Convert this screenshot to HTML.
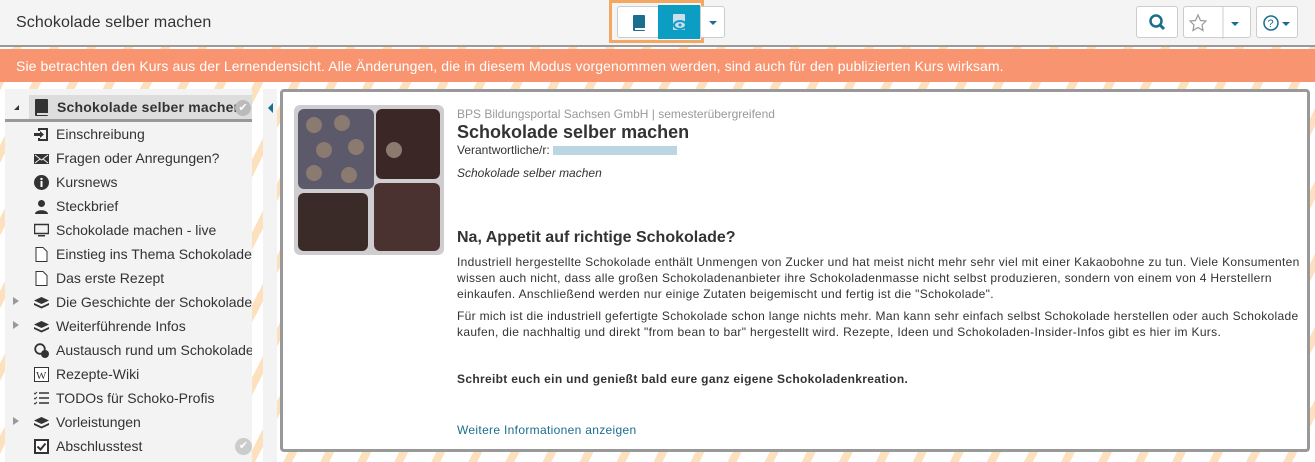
<!DOCTYPE html>
<html><head><meta charset="utf-8"><style>
*{box-sizing:border-box;margin:0;padding:0}
body{width:1315px;height:462px;overflow:hidden;font-family:"Liberation Sans",sans-serif;color:#333;position:relative;
background:repeating-linear-gradient(117deg,#fde0bd 0 8px,#fff 8px 33px);}
.top{position:absolute;left:0;top:0;width:1315px;height:47px;background:#f4f4f4;border-bottom:2px solid #999}
.top h1{position:absolute;left:16px;top:14px;font-size:16px;font-weight:normal;color:#333;letter-spacing:0.1px}
.btn{position:absolute;background:#fff;border:1px solid #ccc;border-radius:3px}
.banner{position:absolute;left:0;top:49px;width:1315px;height:33px;background:#f99470;color:#fff;font-size:14px;padding:9px 16px;letter-spacing:0.1px}
.side{position:absolute;left:5px;top:89px;width:247px;height:373px;background:#f3f3f3}
.coll{position:absolute;left:263px;top:89px;width:14px;height:373px;background:#f3f3f3}
.item{position:absolute;left:0;height:24px;font-size:14px;color:#333;white-space:nowrap;width:247px;overflow:hidden}
.item span{position:absolute;left:51px;top:4px}
.item .ic{position:absolute;left:29px;top:5px;width:15px;height:15px}
.tri{position:absolute;left:8px;top:7px;width:0;height:0;border-left:6px solid #999;border-top:4px solid transparent;border-bottom:4px solid transparent}
.main{position:absolute;left:280px;top:89px;width:1030px;height:363px;background:#fff;border:3px solid #999;border-radius:4px}
.p{position:absolute;left:174px;font-size:12px;line-height:16px;width:852px;color:#333}
.t{letter-spacing:0.32px}
</style></head><body>
<div class="top"><h1>Schokolade selber machen</h1>
<div style="position:absolute;left:609px;top:0;width:95px;height:43px;border:3px solid #f2a863"></div>
<div class="btn" style="left:617px;top:6px;width:42px;height:32px;border-radius:3px 0 0 3px"><svg width="42" height="32"><rect x="15" y="8" width="12" height="16" rx="1" fill="#1a6e8e"/><rect x="17" y="21" width="10" height="2" fill="#fff"/></svg></div>
<div style="position:absolute;left:658px;top:5px;width:42px;height:34px;background:#0b9dc2"><svg width="42" height="34"><rect x="15" y="9" width="12" height="16" rx="1" fill="#cde" /><ellipse cx="22" cy="20" rx="6" ry="4" fill="none" stroke="#0b9dc2" stroke-width="2"/><circle cx="22" cy="20" r="1.5" fill="#0b9dc2"/></svg></div>
<div class="btn" style="left:700px;top:6px;width:25px;height:32px;border-radius:0 3px 3px 0"><div style="position:absolute;left:8px;top:14px;border-top:4px solid #1a6e8e;border-left:4px solid transparent;border-right:4px solid transparent"></div></div>
<div class="btn" style="left:1136px;top:6px;width:42px;height:32px"><svg width="42" height="32"><circle cx="19" cy="14" r="5.5" fill="none" stroke="#1a6e8e" stroke-width="2.5"/><line x1="23" y1="18" x2="27" y2="22" stroke="#1a6e8e" stroke-width="3"/></svg></div>
<div class="btn" style="left:1183px;top:6px;width:68px;height:32px"><svg width="68" height="32"><polygon points="14,8 16.5,13.5 22,14 18,18 19,23.5 14,20.5 9,23.5 10,18 6,14 11.5,13.5" fill="none" stroke="#999" stroke-width="1.2"/><line x1="39" y1="0" x2="39" y2="32" stroke="#ccc"/><polygon points="47,15 55,15 51,19" fill="#1a6e8e"/></svg></div>
<div class="btn" style="left:1256px;top:6px;width:42px;height:32px"><svg width="42" height="32"><circle cx="14" cy="16" r="7" fill="none" stroke="#1a6e8e" stroke-width="1.5"/><text x="10.5" y="20" font-size="11" fill="#1a6e8e" font-family="Liberation Sans">?</text><polygon points="25,15 33,15 29,19" fill="#1a6e8e"/></svg></div>
</div>
<div class="banner">Sie betrachten den Kurs aus der Lernendensicht. Alle Änderungen, die in diesem Modus vorgenommen werden, sind auch für den publizierten Kurs wirksam.</div>
<div class="side">
<div style="position:absolute;left:0;top:6px;width:247px;height:27px;border-bottom:3px solid #999"></div>
<div style="position:absolute;left:24px;top:6px;width:223px;height:24px;background:#ddd"></div>
<div style="position:absolute;left:9px;top:16px;border-bottom:5px solid #333;border-left:5px solid transparent"></div>
<svg style="position:absolute;left:29px;top:10px" width="16" height="18"><rect x="1" y="0" width="13" height="17" rx="1" fill="#333"/><rect x="3" y="14" width="11" height="2" fill="#ddd"/></svg>
<div style="position:absolute;left:52px;top:10px;font-size:14px;font-weight:bold;color:#333;white-space:nowrap;width:180px;overflow:hidden;letter-spacing:0.2px">Schokolade selber machen</div>
<div style="position:absolute;left:230px;top:11px;width:16px;height:16px;border-radius:50%;background:#bbb;color:#fff;font-size:11px;text-align:center;line-height:16px">✔</div>
<div class="item" style="top:33px"><svg class="ic" viewBox="0 0 15 15"><path d="M4 1h10v13H4v-3h2v1h6V3H6v1H4z M0 6h6V4l4 3.5L6 11V9H0z" fill="#333"/></svg><span>Einschreibung</span></div>
<div class="item" style="top:57px"><svg class="ic" viewBox="0 0 15 15"><rect x="0" y="3" width="15" height="10" fill="#333"/><path d="M1 4l6.5 5L14 4M1 12l5-4M14 12l-5-4" stroke="#f3f3f3" fill="none"/></svg><span>Fragen oder Anregungen?</span></div>
<div class="item" style="top:81px"><svg class="ic" viewBox="0 0 15 15"><circle cx="7.5" cy="7.5" r="7.5" fill="#333"/><rect x="6.5" y="6" width="2" height="6" fill="#fff"/><circle cx="7.5" cy="4" r="1.2" fill="#fff"/></svg><span>Kursnews</span></div>
<div class="item" style="top:105px"><svg class="ic" viewBox="0 0 15 15"><circle cx="7.5" cy="4.5" r="3.5" fill="#333"/><path d="M1 15c0-5 13-5 13 0z" fill="#333"/></svg><span>Steckbrief</span></div>
<div class="item" style="top:129px"><svg class="ic" viewBox="0 0 15 15"><rect x="0.5" y="1.5" width="14" height="9" fill="none" stroke="#333" stroke-width="1.5"/><rect x="4" y="12" width="7" height="1.5" fill="#333"/></svg><span>Schokolade machen - live</span></div>
<div class="item" style="top:153px"><svg class="ic" viewBox="0 0 15 15"><path d="M2 0.5h7l4 4v10H2z" fill="#fff" stroke="#333"/></svg><span>Einstieg ins Thema Schokolade</span></div>
<div class="item" style="top:177px"><svg class="ic" viewBox="0 0 15 15"><path d="M2 0.5h7l4 4v10H2z" fill="#fff" stroke="#333"/></svg><span>Das erste Rezept</span></div>
<div class="item" style="top:201px"><div class="tri"></div><svg class="ic" viewBox="0 0 15 15"><path d="M7.5 2L15 5.5 7.5 9 0 5.5z M0 8l7.5 3.5L15 8v2l-7.5 3.5L0 10z" fill="#333"/></svg><span>Die Geschichte der Schokolade</span></div>
<div class="item" style="top:225px"><div class="tri"></div><svg class="ic" viewBox="0 0 15 15"><path d="M7.5 2L15 5.5 7.5 9 0 5.5z M0 8l7.5 3.5L15 8v2l-7.5 3.5L0 10z" fill="#333"/></svg><span>Weiterführende Infos</span></div>
<div class="item" style="top:249px"><svg class="ic" viewBox="0 0 15 15"><circle cx="6" cy="6" r="4.8" fill="none" stroke="#333" stroke-width="1.8"/><circle cx="11" cy="11" r="4" fill="#333"/></svg><span>Austausch rund um Schokolade</span></div>
<div class="item" style="top:273px"><svg class="ic" viewBox="0 0 15 15"><rect x="0.5" y="0.5" width="14" height="14" fill="#fff" stroke="#333"/><text x="2" y="12" font-size="11" font-family="Liberation Serif" fill="#333">W</text></svg><span>Rezepte-Wiki</span></div>
<div class="item" style="top:297px"><svg class="ic" viewBox="0 0 15 15"><path d="M5 2h10M5 7h10M5 12h10" stroke="#333" stroke-width="1.6"/><path d="M0 2l1 1 2-2M0 7l1 1 2-2M0 12l1 1 2-2" stroke="#333" fill="none"/></svg><span>TODOs für Schoko-Profis</span></div>
<div class="item" style="top:321px"><div class="tri"></div><svg class="ic" viewBox="0 0 15 15"><path d="M7.5 2L15 5.5 7.5 9 0 5.5z M0 8l7.5 3.5L15 8v2l-7.5 3.5L0 10z" fill="#333"/></svg><span>Vorleistungen</span></div>
<div class="item" style="top:345px"><svg class="ic" viewBox="0 0 15 15"><rect x="1" y="1" width="13" height="13" fill="#fff" stroke="#333" stroke-width="2"/><path d="M3.5 7.5l3 3 5-6" stroke="#333" stroke-width="2" fill="none"/></svg><span>Abschlusstest</span><div style="position:absolute;left:230px;top:4px;width:17px;height:17px;border-radius:50%;background:#ccc;color:#fff;font-size:11px;text-align:center;line-height:17px">✔</div></div>
</div>
<div class="coll"><div style="position:absolute;left:5px;top:14px;border-right:5px solid #1a6e8e;border-top:5px solid transparent;border-bottom:5px solid transparent"></div></div>
<div class="main">
<svg style="position:absolute;left:11px;top:13px" width="150" height="150"><rect width="150" height="150" rx="6" fill="#cfcdd0"/><rect x="4" y="4" width="76" height="80" rx="6" fill="#5c5a6a"/><rect x="82" y="4" width="64" height="70" rx="6" fill="#3b2826"/><rect x="4" y="88" width="70" height="58" rx="6" fill="#3a2a28"/><rect x="80" y="78" width="66" height="68" rx="6" fill="#4a3230"/>
<g fill="#8a7a70"><circle cx="20" cy="20" r="8"/><circle cx="48" cy="18" r="8"/><circle cx="30" cy="45" r="8"/><circle cx="62" cy="42" r="8"/><circle cx="20" cy="68" r="8"/><circle cx="55" cy="70" r="8"/><circle cx="100" cy="45" r="8"/></g></svg>
<div class="p" style="top:14px;color:#999">BPS Bildungsportal Sachsen GmbH | semesterübergreifend</div>
<div class="p" style="top:29px;font-size:18px;font-weight:bold;line-height:22px">Schokolade selber machen</div>
<div class="p" style="top:50px">Verantwortliche/r: <span style="display:inline-block;width:124px;height:9px;background:#b9d6e2;vertical-align:middle"></span></div>
<div class="p" style="top:73px;font-style:italic">Schokolade selber machen</div>
<div class="p" style="top:136px;font-size:16px;font-weight:bold;line-height:20px">Na, Appetit auf richtige Schokolade?</div>
<div class="p t" style="top:162px">Industriell hergestellte Schokolade enthält Unmengen von Zucker und hat meist nicht mehr sehr viel mit einer Kakaobohne zu tun. Viele Konsumenten wissen auch nicht, dass alle großen Schokoladenanbieter ihre Schokoladenmasse nicht selbst produzieren, sondern von einem von 4 Herstellern einkaufen. Anschließend werden nur einige Zutaten beigemischt und fertig ist die "Schokolade".</div>
<div class="p t" style="top:216px">Für mich ist die industriell gefertigte Schokolade schon lange nichts mehr. Man kann sehr einfach selbst Schokolade herstellen oder auch Schokolade kaufen, die nachhaltig und direkt "from bean to bar" hergestellt wird. Rezepte, Ideen und Schokoladen-Insider-Infos gibt es hier im Kurs.</div>
<div class="p t" style="top:279px;font-weight:bold">Schreibt euch ein und genießt bald eure ganz eigene Schokoladenkreation.</div>
<div class="p t" style="top:330px;color:#1a6e8e">Weitere Informationen anzeigen</div>
</div>
</body></html>
